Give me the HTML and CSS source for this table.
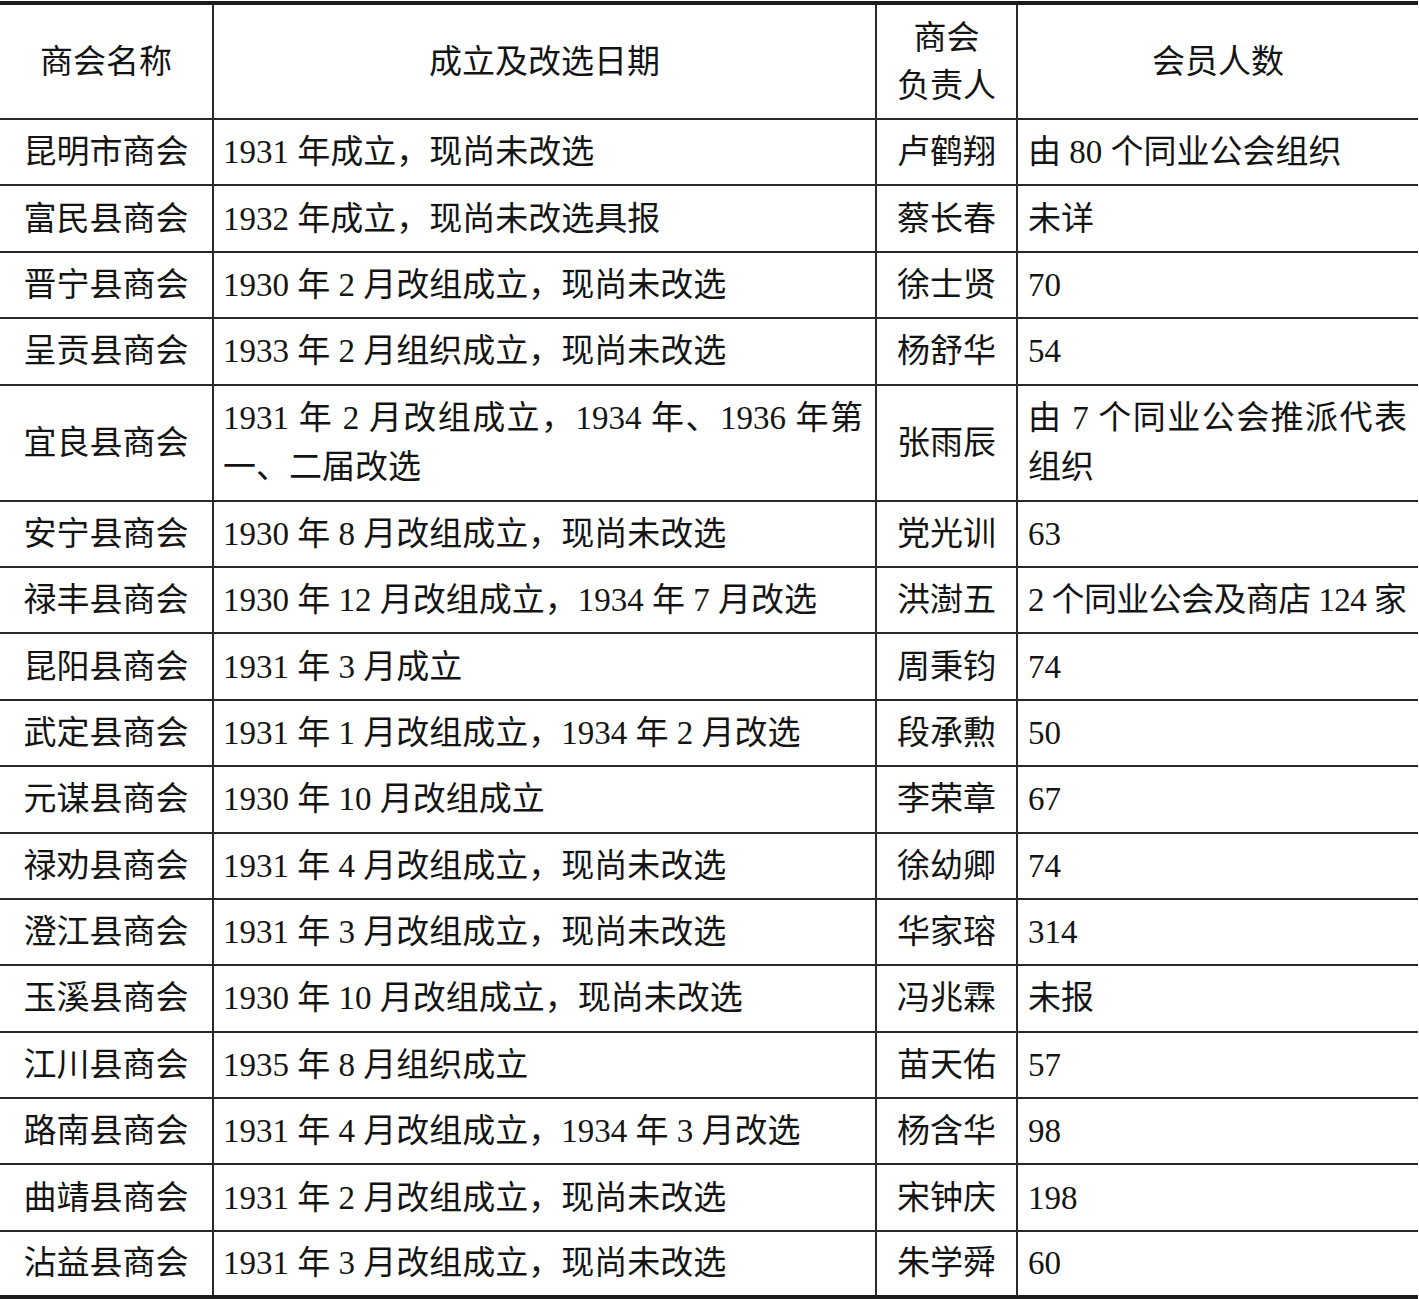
FILE: index.html
```html
<!DOCTYPE html>
<html lang="zh">
<head>
<meta charset="utf-8">
<link rel="stylesheet" href="styles.css">
</head>
<body>
<table class="tbl">
<colgroup>
<col class="c1"><col class="c2"><col class="c3"><col class="c4">
</colgroup>
<thead>
<tr class="head">
<th>商会名称</th>
<th>成立及改选日期</th>
<th class="two">商会<br>负责人</th>
<th>会员人数</th>
</tr>
</thead>
<tbody>
<tr><td class="name">昆明市商会</td><td class="txt">1931 年成立，现尚未改选</td><td class="name">卢鹤翔</td><td class="txt">由 80 个同业公会组织</td></tr>
<tr><td class="name">富民县商会</td><td class="txt">1932 年成立，现尚未改选具报</td><td class="name">蔡长春</td><td class="txt">未详</td></tr>
<tr><td class="name">晋宁县商会</td><td class="txt">1930 年 2 月改组成立，现尚未改选</td><td class="name">徐士贤</td><td class="txt">70</td></tr>
<tr><td class="name">呈贡县商会</td><td class="txt">1933 年 2 月组织成立，现尚未改选</td><td class="name">杨舒华</td><td class="txt">54</td></tr>
<tr class="tall"><td class="name">宜良县商会</td><td class="txt"><div class="jl">1931 年 2 月改组成立，1934 年、1936 年第</div><div>一、二届改选</div></td><td class="name">张雨辰</td><td class="txt"><div class="jl">由 7 个同业公会推派代表</div><div>组织</div></td></tr>
<tr><td class="name">安宁县商会</td><td class="txt">1930 年 8 月改组成立，现尚未改选</td><td class="name">党光训</td><td class="txt">63</td></tr>
<tr><td class="name">禄丰县商会</td><td class="txt">1930 年 12 月改组成立，1934 年 7 月改选</td><td class="name">洪澍五</td><td class="txt tight">2 个同业公会及商店 124 家</td></tr>
<tr><td class="name">昆阳县商会</td><td class="txt">1931 年 3 月成立</td><td class="name">周秉钧</td><td class="txt">74</td></tr>
<tr><td class="name">武定县商会</td><td class="txt">1931 年 1 月改组成立，1934 年 2 月改选</td><td class="name">段承勲</td><td class="txt">50</td></tr>
<tr><td class="name">元谋县商会</td><td class="txt">1930 年 10 月改组成立</td><td class="name">李荣章</td><td class="txt">67</td></tr>
<tr><td class="name">禄劝县商会</td><td class="txt">1931 年 4 月改组成立，现尚未改选</td><td class="name">徐幼卿</td><td class="txt">74</td></tr>
<tr><td class="name">澄江县商会</td><td class="txt">1931 年 3 月改组成立，现尚未改选</td><td class="name">华家瑢</td><td class="txt">314</td></tr>
<tr><td class="name">玉溪县商会</td><td class="txt">1930 年 10 月改组成立，现尚未改选</td><td class="name">冯兆霖</td><td class="txt">未报</td></tr>
<tr><td class="name">江川县商会</td><td class="txt">1935 年 8 月组织成立</td><td class="name">苗天佑</td><td class="txt">57</td></tr>
<tr><td class="name">路南县商会</td><td class="txt">1931 年 4 月改组成立，1934 年 3 月改选</td><td class="name">杨含华</td><td class="txt">98</td></tr>
<tr><td class="name">曲靖县商会</td><td class="txt">1931 年 2 月改组成立，现尚未改选</td><td class="name">宋钟庆</td><td class="txt">198</td></tr>
<tr><td class="name">沾益县商会</td><td class="txt">1931 年 3 月改组成立，现尚未改选</td><td class="name">朱学舜</td><td class="txt">60</td></tr>
</tbody>
</table>
</body>
</html>
```
FILE: styles.css
```css
html, body {
  margin: 0;
  padding: 0;
  background: #ffffff;
}
body {
  padding-top: 1px;
  font-family: "Liberation Serif", "Noto Sans CJK SC", serif;
  font-size: 33px;
  color: #141414;
}
.tbl {
  width: 1418px;
  table-layout: fixed;
  border-collapse: collapse;
  border-top: 4px solid #1c1c1c;
  border-bottom: 5px solid #1c1c1c;
}
.c1 { width: 213px; }
.c2 { width: 663px; }
.c3 { width: 141px; }
.c4 { width: 401px; }
.tbl th,
.tbl td {
  border-left: 2px solid #2a2a2a;
  border-right: 2px solid #2a2a2a;
  border-bottom: 2px solid #2a2a2a;
  padding: 0;
  vertical-align: middle;
  font-weight: normal;
  line-height: 48px;
  white-space: nowrap;
}
.tbl th:first-child,
.tbl td:first-child { border-left: none; }
.tbl th:last-child,
.tbl td:last-child { border-right: none; }
.head th {
  height: 113px;
  text-align: center;
}
.tbl tbody tr { height: 66.4px; }
.tbl tbody tr.tall { height: 116px; }
.name { text-align: center; }
.txt {
  text-align: left;
  padding-left: 9px !important;
  padding-right: 12px !important;
}
.tbl td:last-child.txt {
  padding-left: 10px !important;
  padding-right: 11px !important;
}
.tight { letter-spacing: -0.6px; }
.jl {
  text-align: justify;
  text-align-last: justify;
}
.tall .txt { line-height: 49px; }
```
